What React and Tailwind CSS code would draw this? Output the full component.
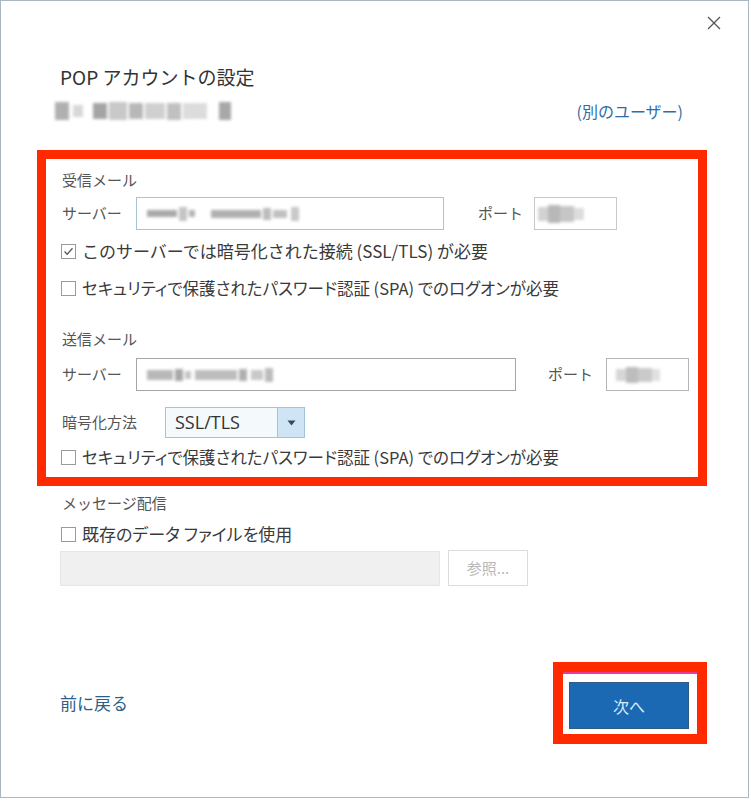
import React from "react";

const FONT = { fontFamily: '"Noto Sans CJK JP", "Noto Sans", sans-serif' };

function Box({ checked }) {
  return (
    <span className="w-[15px] h-[15px] border border-[#9a9a9a] bg-white flex items-center justify-center shrink-0">
      {checked && (
        <svg width="11" height="11" viewBox="0 0 11 11">
          <path d="M1.5 5.5 L4.2 8.2 L9.5 2.3" fill="none" stroke="#5a5a5a" strokeWidth="1.3" />
        </svg>
      )}
    </span>
  );
}

function Blur({ blocks }) {
  return (
    <div className="flex items-center blur-[1.5px]">
      {blocks.map((b, i) => (
        <div key={i} style={{ width: b[0], height: b[1], background: b[2], marginLeft: b[3] || 0 }} />
      ))}
    </div>
  );
}

export default function App() {
  return (
    <div className="w-[751px] h-[801px] bg-white" style={FONT}>
      <div className="w-[749px] h-[798px] bg-white shadow-[inset_0_0_0_1px_#a9b7c1] flex flex-col">
        {/* close */}
        <div className="h-[46px] flex justify-end items-start pt-[16px] pr-[28px]">
          <svg width="14" height="14" viewBox="0 0 14 14">
            <path d="M1 1 L13 13 M13 1 L1 13" stroke="#555" strokeWidth="1.3" />
          </svg>
        </div>
        {/* title */}
        <div className="mt-[17px] ml-[60px] h-[26px] flex items-center text-[19px] text-[#333] leading-none">
          POP アカウントの設定
        </div>
        <div className="mt-[11px] h-[22px] flex items-center justify-between pl-[55px] pr-[66px]">
          <Blur
            blocks={[
              [14, 18, "#b0b0b0"],
              [10, 12, "#d8d8d8", 4],
              [14, 16, "#a4a4a4", 10],
              [18, 18, "#c8c8c8", 2],
              [14, 16, "#b8b8b8", 2],
              [20, 16, "#d0d0d0", 2],
              [14, 17, "#c0c0c0", 2],
              [24, 16, "#dcdcdc", 2],
              [12, 18, "#a8a8a8", 12],
            ]}
          />
          <span className="text-[16px] text-[#2f6ea5] leading-none">(別のユーザー)</span>
        </div>

        {/* red box 1 */}
        <div className="mt-[28px] ml-[37px] w-[670px] border-[9px] border-[#ff2a00] pl-[15px] pt-[8px] flex flex-col text-[#404040]">
          <div className="h-[26px] flex items-center text-[15px] text-[#555] pl-[1px]">受信メール</div>
          <div className="mt-[4px] h-[33px] flex items-center pl-[1px]">
            <span className="w-[74px] text-[15px] text-[#555]">サーバー</span>
            <div className="w-[308px] h-[33px] border border-[#a9c3d3] flex items-center pl-[10px]">
              <Blur
                blocks={[
                  [30, 7, "#a9a9a9"],
                  [8, 14, "#c4c4c4", 2],
                  [6, 7, "#b5b5b5", 2],
                  [50, 8, "#b0b0b0", 16],
                  [8, 12, "#bcbcbc", 2],
                  [14, 8, "#c0c0c0", 2],
                  [8, 14, "#c8c8c8", 4],
                ]}
              />
            </div>
            <span className="ml-[34px] w-[56px] text-[15px] text-[#555]">ポート</span>
            <div className="w-[83px] h-[33px] border border-[#c8c8c8] flex items-center pl-[3px]">
              <Blur blocks={[[10, 14, "#d2d2d2"], [12, 18, "#b8b8b8"], [14, 16, "#c6c6c6"], [10, 12, "#dddddd"]]} />
            </div>
          </div>
          <div className="h-[42px] flex items-center gap-[6px] text-[17px] text-[#3a3a3a]">
            <Box checked />
            <span>このサーバーでは暗号化された接続 (SSL/TLS) が必要</span>
          </div>
          <div className="h-[32px] flex items-center gap-[6px] text-[16.5px] text-[#3a3a3a]">
            <Box />
            <span className="[font-feature-settings:'palt']">セキュリティで保護されたパスワード認証 (SPA) でのログオンが必要</span>
          </div>

          <div className="mt-[22px] h-[26px] flex items-center text-[15px] text-[#555] pl-[1px]">送信メール</div>
          <div className="mt-[6px] h-[33px] flex items-center pl-[1px]">
            <span className="w-[74px] text-[15px] text-[#555]">サーバー</span>
            <div className="w-[380px] h-[33px] border border-[#a6a6a6] flex items-center pl-[10px]">
              <Blur
                blocks={[
                  [26, 10, "#b8b8b8"],
                  [8, 12, "#a8a8a8", 2],
                  [6, 8, "#c4c4c4", 2],
                  [42, 10, "#bdbdbd", 4],
                  [8, 12, "#b0b0b0", 2],
                  [12, 10, "#c8c8c8", 4],
                  [8, 14, "#bcbcbc", 2],
                ]}
              />
            </div>
            <span className="ml-[32px] w-[58px] text-[15px] text-[#555]">ポート</span>
            <div className="w-[83px] h-[33px] border border-[#b5b5b5] flex items-center pl-[9px]">
              <Blur blocks={[[10, 12, "#d6d6d6"], [12, 16, "#bdbdbd"], [14, 14, "#cacaca"], [8, 12, "#e0e0e0"]]} />
            </div>
          </div>
          <div className="mt-[16px] h-[31px] flex items-center pl-[1px]">
            <span className="w-[103px] text-[15px] text-[#555]">暗号化方法</span>
            <div className="w-[140px] h-[31px] border border-[#9fc4dc] bg-[#f4f9fc] flex">
              <div className="flex-1 flex items-center pl-[9px] text-[18px] text-[#333]" style={{ fontFamily: '"Open Sans", "Noto Sans", sans-serif' }}>SSL/TLS</div>
              <div className="w-[27px] h-full border-l border-[#9fc4dc] bg-[#cfe5f6] flex items-center justify-center">
                <svg width="9" height="6" viewBox="0 0 9 6">
                  <path d="M0.5 0.5 L8.5 0.5 L4.5 5.5 Z" fill="#3b4a56" />
                </svg>
              </div>
            </div>
          </div>
          <div className="h-[39px] flex items-center gap-[6px] text-[16.5px] text-[#3a3a3a]">
            <Box />
            <span className="[font-feature-settings:'palt']">セキュリティで保護されたパスワード認証 (SPA) でのログオンが必要</span>
          </div>
        </div>

        {/* message delivery */}
        <div className="ml-[62px] mt-[5px] h-[24px] flex items-center text-[15px] text-[#555]">メッセージ配信</div>
        <div className="ml-[61px] mt-[5px] h-[28px] flex items-center gap-[6px] text-[17px] text-[#3a3a3a]">
          <Box />
          <span className="[font-feature-settings:'palt']">既存のデータ ファイルを使用</span>
        </div>
        <div className="ml-[60px] mt-[2px] h-[36px] flex items-center gap-[8px]">
          <div className="w-[380px] h-[35px] bg-[#f0f0f0] border border-[#e6e6e6]" />
          <div className="w-[80px] h-[36px] border border-[#dcdcdc] bg-white flex items-center justify-center text-[15px] text-[#b8b8b8]">
            参照...
          </div>
        </div>

        {/* footer */}
        <div className="mt-[76px] h-[82px] flex items-center justify-between pl-[60px] pr-[42px]">
          <span className="text-[17px] text-[#2b5f88]">前に戻る</span>
          <div className="w-[154px] h-[82px] border-[10px] border-[#ff2a00] flex flex-col">
            <div className="h-[2px] bg-[#ec3a97]" />
            <div className="flex-1 pt-[8px] pl-[6px] pr-[8px] pb-[5px]">
              <div className="w-[120px] h-[47px] bg-[#1b69b3] border border-[#2f5c82] flex items-center justify-center text-[16px] text-[#d8ecfa]">
                次へ
              </div>
            </div>
          </div>
        </div>
      </div>
    </div>
  );
}
